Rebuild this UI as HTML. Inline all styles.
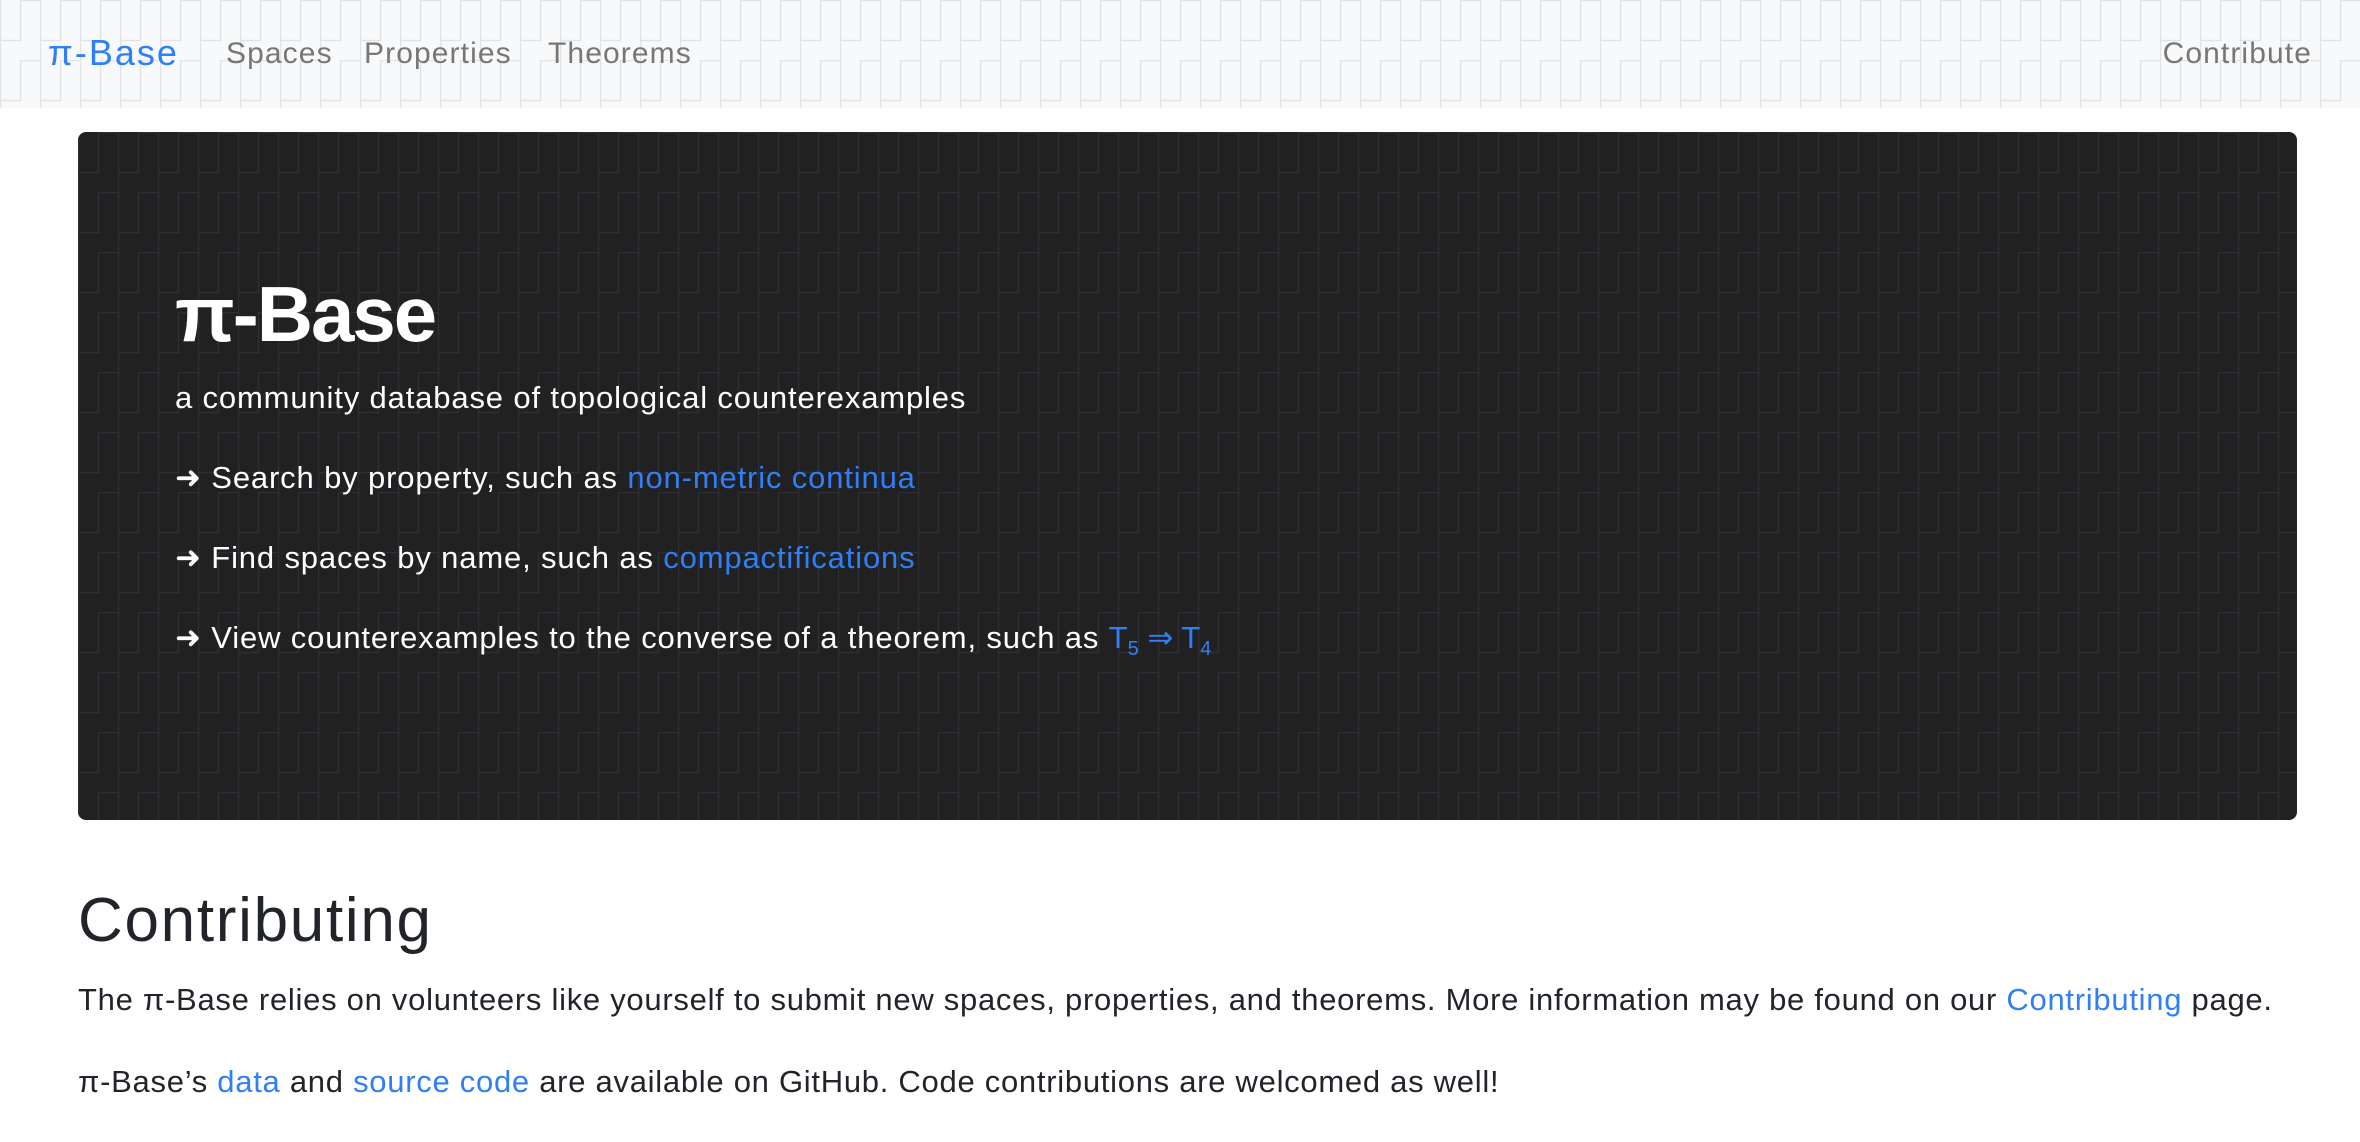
<!DOCTYPE html>
<html><head><meta charset="utf-8"><style>
html,body{margin:0;padding:0;width:2360px;height:1142px;overflow:hidden;background:#fff;font-family:"Liberation Sans",Arial,sans-serif;}
.a{position:absolute;white-space:nowrap;line-height:1;}
a{color:#2f7ff7;text-decoration:none}
#nav{position:absolute;left:0;top:0;width:2360px;height:108px;background:#f8f9fa;}
#jum{position:absolute;left:78px;top:132px;width:2219px;height:688px;background:#212121;border-radius:8px;overflow:hidden;}
.w{color:#fff;font-size:31px;letter-spacing:0.85px}
.nl{color:#777;font-size:30px;letter-spacing:1.1px}
.p{color:#212529;font-size:31px;letter-spacing:0.72px}
</style></head><body>
<div id="nav">
<svg width="2360" height="108" style="position:absolute;left:0;top:0">
<defs><pattern id="pn" width="40" height="60" patternUnits="userSpaceOnUse">
<path d="M0.5 0V40.5H20.5V0.5H40M0.5 40V60" fill="none" stroke="#e2e3e5" stroke-width="1.5"/>
</pattern></defs>
<rect width="2360" height="108" fill="url(#pn)"/>
</svg>
<div class="a" style="left:48px;top:35px;font-size:36px;color:#2f7ff7;letter-spacing:2px">π-Base</div>
<div class="a nl" style="left:226px;top:39px">Spaces</div>
<div class="a nl" style="left:364px;top:39px">Properties</div>
<div class="a nl" style="left:548px;top:39px">Theorems</div>
<div class="a nl" style="right:48px;top:39px">Contribute</div>
</div>
<div id="jum">
<svg width="2219" height="688" style="position:absolute;left:0;top:0">
<defs><pattern id="pj" width="40" height="60" patternUnits="userSpaceOnUse">
<path d="M0.5 0V40.5H20.5V0.5H40M0.5 40V60" fill="none" stroke="#2e2e36" stroke-width="1.5"/>
</pattern></defs>
<rect width="2219" height="688" fill="url(#pj)"/>
</svg>
<div class="a" style="left:97px;top:143px;font-size:78px;color:#fff;font-weight:bold;letter-spacing:-2px">π-Base</div>
<div class="a w" style="left:97px;top:250px">a community database of topological counterexamples</div>
<div class="a w" style="left:97px;top:330px">➜ Search by property, such as <a>non-metric continua</a></div>
<div class="a w" style="left:97px;top:410px">➜ Find spaces by name, such as <a>compactifications</a></div>
<div class="a w" style="left:97px;top:490px">➜ View counterexamples to the converse of a theorem, such as <a style="letter-spacing:0">T<sub style="font-size:20px">5</sub> ⇒ T<sub style="font-size:20px">4</sub></a></div>
</div>
<div class="a" style="left:78px;top:890px;font-size:62px;color:#212529;letter-spacing:1.7px">Contributing</div>
<div class="a p" style="left:78px;top:984px">The π-Base relies on volunteers like yourself to submit new spaces, properties, and theorems. More information may be found on our <a>Contributing</a> page.</div>
<div class="a p" style="left:78px;top:1066px">π-Base’s <a>data</a> and <a>source code</a> are available on GitHub. Code contributions are welcomed as well!</div>
</body></html>
